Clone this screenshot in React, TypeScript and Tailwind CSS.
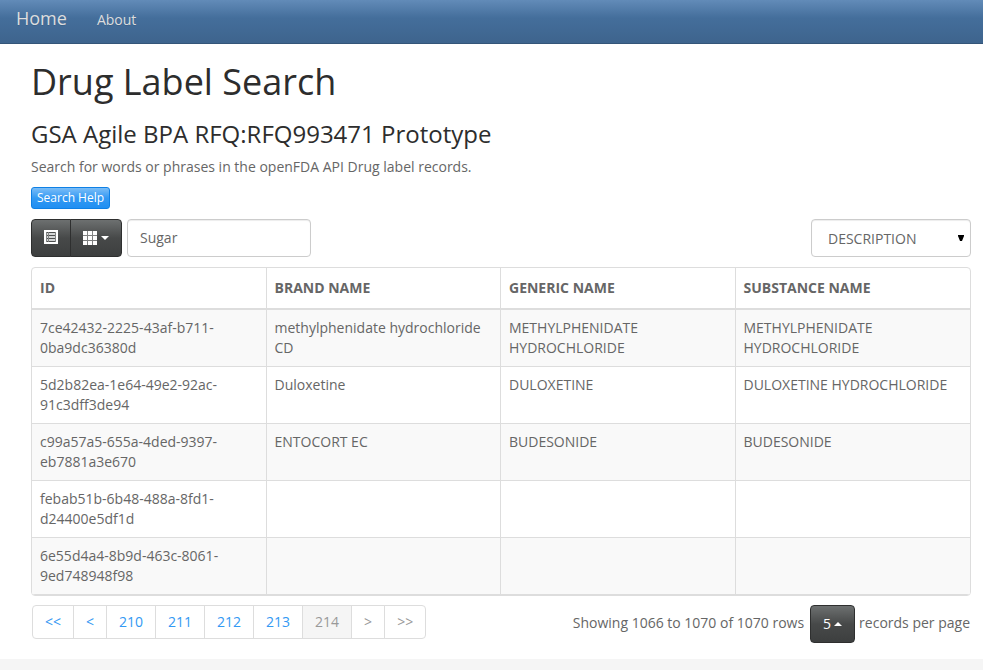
import React from "react";

const columns = ["ID", "BRAND NAME", "GENERIC NAME", "SUBSTANCE NAME"];

const rows = [
  ["7ce42432-2225-43af-b711-0ba9dc36380d", "methylphenidate hydrochloride CD", "METHYLPHENIDATE HYDROCHLORIDE", "METHYLPHENIDATE HYDROCHLORIDE"],
  ["5d2b82ea-1e64-49e2-92ac-91c3dff3de94", "Duloxetine", "DULOXETINE", "DULOXETINE HYDROCHLORIDE"],
  ["c99a57a5-655a-4ded-9397-eb7881a3e670", "ENTOCORT EC", "BUDESONIDE", "BUDESONIDE"],
  ["febab51b-6b48-488a-8fd1-d24400e5df1d", "", "", ""],
  ["6e55d4a4-8b9d-463c-8061-9ed748948f98", "", "", ""],
];

const pages = [
  { label: "<<", state: "link" },
  { label: "<", state: "link" },
  { label: "210", state: "link" },
  { label: "211", state: "link" },
  { label: "212", state: "link" },
  { label: "213", state: "link" },
  { label: "214", state: "active" },
  { label: ">", state: "disabled" },
  { label: ">>", state: "disabled" },
];

const pageStyles: Record<string, string> = {
  link: "text-[#3399f3] bg-white",
  active: "text-[#999999] bg-[#f5f5f5]",
  disabled: "text-[#999999] bg-white",
};

const darkButton =
  "flex h-[38px] items-center border border-[#2e2f2f] bg-[linear-gradient(#6d7070,#474949_50%,#3d3f3f)] text-white";

function ListIcon() {
  return (
    <svg width="14" height="14" viewBox="0 0 14 14" aria-hidden="true">
      <path d="M0 0h14v14H0z" fill="#fff" />
      <path d="M2 3h10v9H2z" fill="#d4d6d6" />
      <path d="M2 2h10v1H2zM2 5h10v1H2zM2 8h10v1H2zM2 11h10v1H2z" fill="#4d4f4f" />
      <path d="M2 2h1v10H2zM4 2h1v10H4zM11 2h1v10h-1z" fill="#838585" />
    </svg>
  );
}

function GridIcon() {
  return (
    <svg width="14" height="14" viewBox="0 0 14 14" fill="currentColor" aria-hidden="true">
      <path d="M0 0h14v14H0z" opacity="0.3" />
      <path d="M0 0h4v4H0zM5 0h4v4H5zM10 0h4v4h-4zM0 5h4v4H0zM5 5h4v4H5zM10 5h4v4h-4zM0 10h4v4H0zM5 10h4v4H5zM10 10h4v4h-4z" />
    </svg>
  );
}

function Caret({ up = false }: { up?: boolean }) {
  return (
    <svg width="8" height="4" viewBox="0 0 8 4" fill="currentColor" aria-hidden="true">
      <path d={up ? "M0 4h8L4 0z" : "M0 0h8L4 4z"} />
    </svg>
  );
}

export default function App() {
  return (
    <div className="min-h-screen bg-[#f5f5f5] font-['Open_Sans',sans-serif] text-sm leading-5 text-[#666666]">
      <div className="bg-white pb-4">
        <nav className="flex h-11 items-center gap-[30px] border-b border-[#345578] bg-[linear-gradient(#628bb8,#446e9b_42%,#3e648d)] px-4 pb-2 text-[#dddddd] [text-shadow:0_1px_0_rgba(0,0,0,0.1)]">
          <a href="#home" className="text-lg leading-5">Home</a>
          <a href="#about" className="pt-1">About</a>
        </nav>

        <main className="pr-3 pl-[31px]">
          <h1 className="pt-[18px] text-4xl leading-10 text-[#2d2d2d]">Drug Label Search</h1>
          <h2 className="mt-[19px] text-2xl leading-[26px] text-[#2d2d2d]">GSA Agile BPA RFQ:RFQ993471 Prototype</h2>
          <p className="mt-2.5">Search for words or phrases in the openFDA API Drug label records.</p>
          <button
            type="button"
            className="mt-2.5 block h-[22px] rounded-[3px] border border-[#0e80e5] bg-[linear-gradient(#7bbdf7,#3399f3_50%,#208ff2)] px-[5px] text-xs leading-5 text-white"
          >
            Search Help
          </button>

          <div className="mt-2.5 flex items-center justify-between">
            <div className="flex items-center gap-[5px]">
              <div className="flex">
                <button type="button" aria-label="Toggle view" className={`${darkButton} rounded-l px-3 pb-0.5`}>
                  <ListIcon />
                </button>
                <button type="button" aria-label="Columns" className={`${darkButton} -ml-px gap-1 rounded-r px-3`}>
                  <GridIcon />
                  <Caret />
                </button>
              </div>
              <input
                type="text"
                aria-label="Search"
                defaultValue="Sugar"
                className="h-[38px] w-46 rounded border border-[#cccccc] px-3 pb-0.5 shadow-[inset_0_1px_1px_rgba(0,0,0,0.075)] outline-none"
              />
            </div>
            <div className="relative">
              <select
                aria-label="Search field"
                className="h-[38px] w-40 appearance-none rounded border border-[#cccccc] bg-white px-4 pt-0.5 shadow-[inset_0_1px_1px_rgba(0,0,0,0.075)] outline-none"
              >
                <option>DESCRIPTION</option>
              </select>
              <svg className="pointer-events-none absolute top-4 right-[7px]" width="6" height="6" viewBox="0 0 6 6" aria-hidden="true">
                <path d="M0 0h6v1L4 6H2L0 1z" fill="#000" />
              </svg>
            </div>
          </div>

          <div className="mt-2.5 overflow-hidden rounded border border-[#dddddd]">
            <table className="w-full table-fixed border-separate border-spacing-0 text-left">
              <thead>
                <tr>
                  {columns.map((c) => (
                    <th key={c} className="h-[42px] border-r border-b-2 border-[#dddddd] px-2 font-bold last:border-r-0">
                      {c}
                    </th>
                  ))}
                </tr>
              </thead>
              <tbody>
                {rows.map((r) => (
                  <tr key={r[0]} className="odd:bg-[#f9f9f9]">
                    {r.map((v, i) => (
                      <td key={i} className="border-r border-b border-[#dddddd] p-2 align-top last:border-r-0">
                        {v}
                      </td>
                    ))}
                  </tr>
                ))}
              </tbody>
            </table>
          </div>

          <div className="mt-[9px] flex items-start justify-between">
            <ul className="ml-px flex">
              {pages.map((p) => (
                <li key={p.label} className="group -ml-px first:ml-0">
                  <a
                    href="#page"
                    className={`block border border-[#dddddd] px-3 py-1.5 group-first:rounded-l group-last:rounded-r ${pageStyles[p.state]}`}
                  >
                    {p.label}
                  </a>
                </li>
              ))}
            </ul>
            <div className="flex items-center gap-1 pr-px">
              <span className="pr-0.5 pb-0.5">Showing 1066 to 1070 of 1070 rows</span>
              <button type="button" className={`${darkButton} gap-[3px] rounded px-3`}>
                5
                <Caret up />
              </button>
              <span className="pb-0.5">records per page</span>
            </div>
          </div>
        </main>
      </div>
    </div>
  );
}
